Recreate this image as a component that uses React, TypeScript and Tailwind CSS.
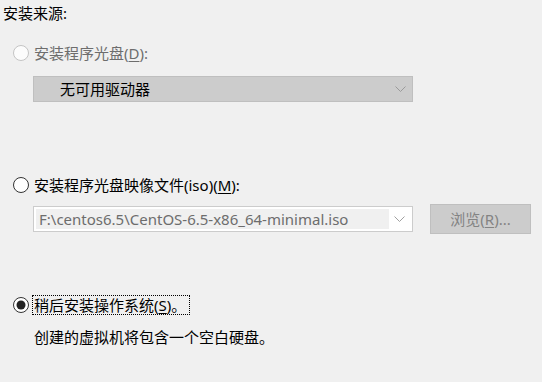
import React from "react";

const font = { fontFamily: '"Noto Sans", "Noto Sans CJK SC", sans-serif' };

function Radio({ state }: { state: "disabled" | "off" | "on" }) {
  const stroke = state === "disabled" ? "#c4c4c4" : "#333333";
  const fill = state === "disabled" ? "#fcfcfc" : "#ffffff";
  return (
    <svg width="16" height="16" viewBox="0 0 16 16" className="shrink-0">
      <circle cx="8" cy="8" r="7.5" fill={fill} stroke={stroke} strokeWidth="1" />
      {state === "on" && <circle cx="8" cy="8" r="4.5" fill="#222222" />}
    </svg>
  );
}

function Chevron({ color }: { color: string }) {
  return (
    <svg width="11" height="6" viewBox="0 0 11 6">
      <path d="M0.5 0.5 L5.5 5.5 L10.5 0.5" fill="none" stroke={color} strokeWidth="1" />
    </svg>
  );
}

export default function App() {
  return (
    <div
      className="w-[542px] h-[382px] bg-[#f0f0f0] text-[15px] leading-[20px] text-black overflow-hidden"
      style={font}
    >
      <div className="pl-[3px] pt-[3px]">安装来源:</div>

      <div className="flex items-center gap-[5px] pl-[13px] mt-[20px] h-[20px] text-[#6d6d6d]">
        <Radio state="disabled" />
        <span>
          安装程序光盘(<span className="underline underline-offset-2">D</span>):
        </span>
      </div>

      <div className="ml-[33px] mt-[13px] w-[380px] h-[26px] bg-[#cccccc] border border-[#bfbfbf] flex items-center pl-[26px] pr-[6px]">
        <span className="flex-1">无可用驱动器</span>
        <Chevron color="#9a9a9a" />
      </div>

      <div className="flex items-center gap-[5px] pl-[13px] mt-[73px] h-[20px]">
        <Radio state="off" />
        <span>
          安装程序光盘映像文件(iso)(<span className="underline underline-offset-2">M</span>):
        </span>
      </div>

      <div className="flex items-center mt-[9px] h-[30px]">
        <div className="ml-[33px] w-[380px] h-[26px] bg-white border border-[#cccccc] flex items-stretch p-[2px]">
          <div className="flex-1 bg-[#f0f0f0] text-[#6d6d6d] pl-[3px] flex items-center whitespace-nowrap overflow-hidden">
            F:\centos6.5\CentOS-6.5-x86_64-minimal.iso
          </div>
          <div className="w-[21px] flex items-center justify-center">
            <Chevron color="#a0a0a0" />
          </div>
        </div>
        <div className="ml-[17px] w-[101px] h-[30px] bg-[#cccccc] border border-[#bfbfbf] flex items-center justify-center text-[#838383]">
          浏览(<span className="underline underline-offset-2">R</span>)...
        </div>
      </div>

      <div className="flex items-center gap-[5px] pl-[13px] mt-[61px] h-[20px]">
        <Radio state="on" />
        <span className="outline-1 outline-dotted outline-black -ml-[1px] pl-[1px] pr-[3px] leading-[18px]">
          稍后安装操作系统(<span className="underline underline-offset-2">S</span>)。
        </span>
      </div>

      <div className="pl-[34px] mt-[12px]">创建的虚拟机将包含一个空白硬盘。</div>
    </div>
  );
}
